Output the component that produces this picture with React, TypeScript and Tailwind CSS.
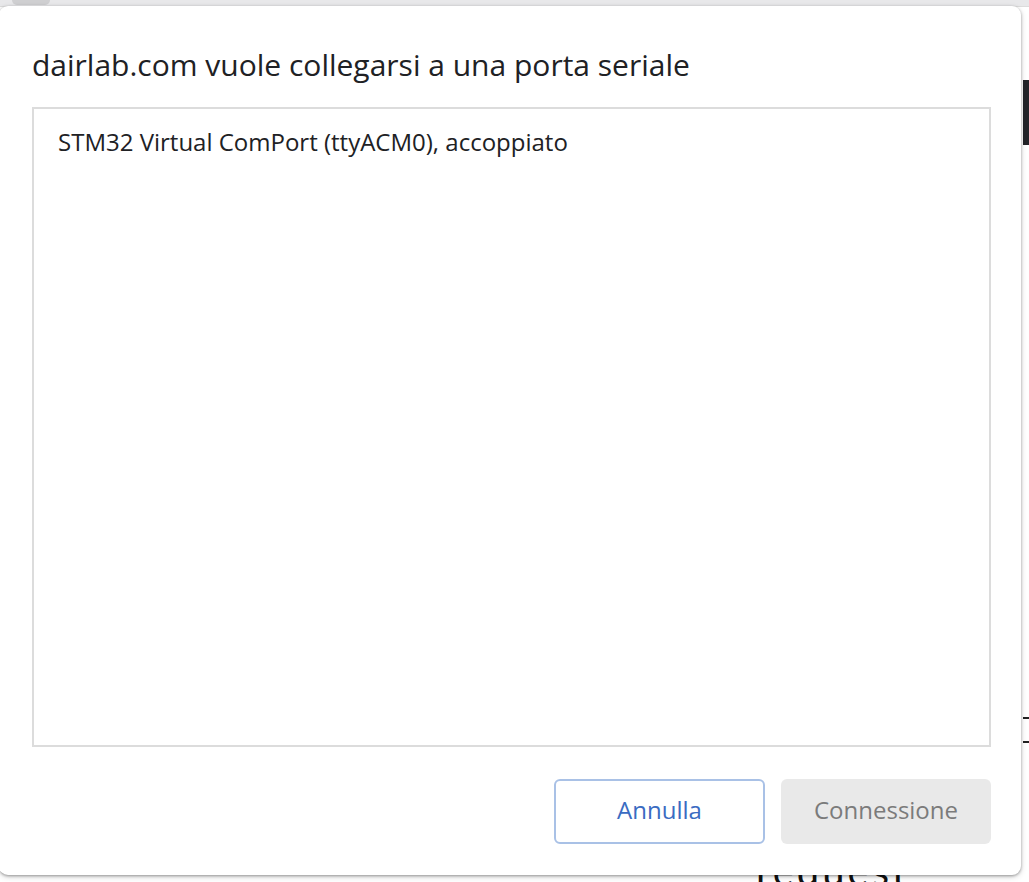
import React from "react";

export default function App() {
  return (
    <div
      className="relative w-[1029px] h-[882px] overflow-hidden bg-white"
      style={{ fontFamily: '"Open Sans", "Noto Sans", sans-serif' }}
    >
      {/* background page, partly covered by the dialog */}
      <div className="absolute inset-x-0 top-0 h-[7px] bg-[#e8e8ea] border-b border-[#dcdcdc]" />
      <div className="absolute left-[12px] top-0 w-[38px] h-[5px] rounded-b-md bg-[#cfcfd1]" />
      <div className="absolute left-[1023px] top-[80px] w-[6px] h-[65px] bg-[#222428]" />
      <div className="absolute left-[1023px] top-[717px] w-[6px] h-[2px] bg-[#222]" />
      <div className="absolute left-[1023px] top-[741px] w-[6px] h-[2px] bg-[#222]" />
      <div
        className="absolute left-[756px] top-[851px] text-[40px] leading-none text-[#111] tracking-[3px]"
        style={{ fontFamily: "Lato, sans-serif" }}
      >
        request
      </div>

      {/* dialog */}
      <div className="absolute left-[-1px] top-[6px] w-[1022px] h-[869px] bg-white rounded-[9px] shadow-[0_1px_3px_rgba(0,0,0,0.35),0_2px_6px_rgba(0,0,0,0.15)] flex flex-col pl-[33px] pr-[30px]">
        <h1 className="mt-[39px] text-[30px] leading-[40px] text-[#202124] font-normal">
          dairlab.com vuole collegarsi a una porta seriale
        </h1>
        <div className="mt-[22px] h-[640px] border-2 border-[#dcdcdc] pl-[24px] pt-[17px]">
          <div className="text-[24px] leading-[32px] text-[#202124]">
            STM32 Virtual ComPort (ttyACM0), accoppiato
          </div>
        </div>
        <div className="mt-[32px] flex justify-end gap-[16px]">
          <button className="w-[211px] h-[65px] rounded-[6px] border-2 border-[#a9c1e6] bg-white text-[24px] leading-[32px] pb-[3px] text-[#3a6bc2]">
            Annulla
          </button>
          <button className="w-[210px] h-[65px] rounded-[6px] bg-[#e9e9e9] text-[24px] leading-[32px] pb-[3px] text-[#7b7b7b]">
            Connessione
          </button>
        </div>
      </div>
    </div>
  );
}
